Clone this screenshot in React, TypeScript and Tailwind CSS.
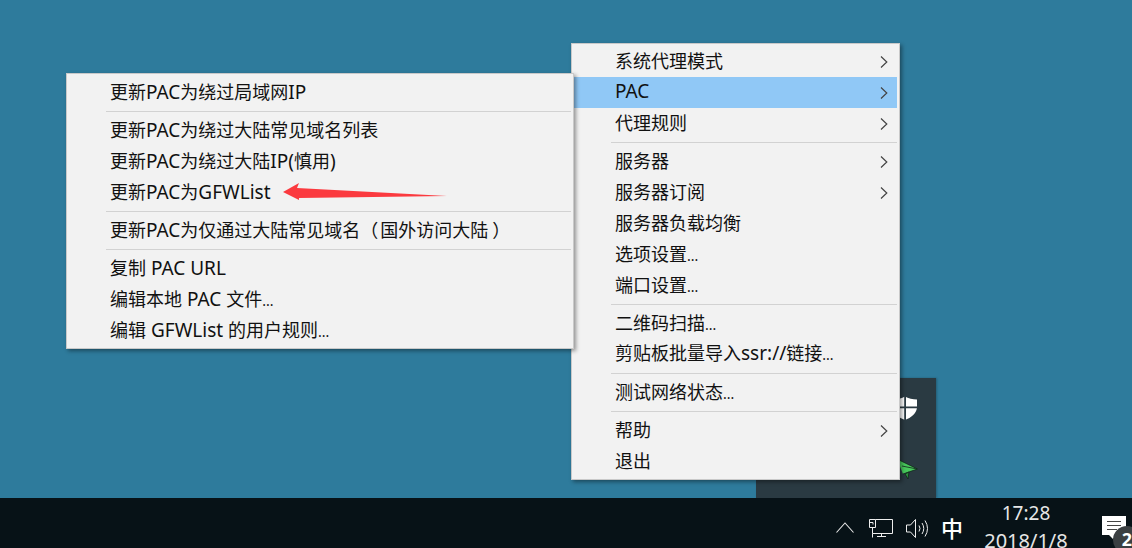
import React from "react";

type Entry = { label?: string; arrow?: boolean; active?: boolean };

const rightMenu: Entry[] = [
  { label: "系统代理模式", arrow: true },
  { label: "PAC", arrow: true, active: true },
  { label: "代理规则", arrow: true },
  {},
  { label: "服务器", arrow: true },
  { label: "服务器订阅", arrow: true },
  { label: "服务器负载均衡" },
  { label: "选项设置..." },
  { label: "端口设置..." },
  {},
  { label: "二维码扫描..." },
  { label: "剪贴板批量导入ssr://链接..." },
  {},
  { label: "测试网络状态..." },
  {},
  { label: "帮助", arrow: true },
  { label: "退出" },
];

const leftMenu: Entry[] = [
  { label: "更新PAC为绕过局域网IP" },
  {},
  { label: "更新PAC为绕过大陆常见域名列表" },
  { label: "更新PAC为绕过大陆IP(慎用)" },
  { label: "更新PAC为GFWList" },
  {},
  { label: "更新PAC为仅通过大陆常见域名（国外访问大陆）" },
  {},
  { label: "复制 PAC URL" },
  { label: "编辑本地 PAC 文件..." },
  { label: "编辑 GFWList 的用户规则..." },
];

// latin runs are a touch larger than the CJK ones in the screenshot, dots narrower
const Label = ({ text }: { text: string }) => (
  <span className="whitespace-pre">
    {text.split(/(\.\.\.|[（）]|[\x20-\x7e]+)/).map((run, i) => {
      if (run === "...") return <span key={i} className="text-[14px]">{run}</span>;
      if (run === "（") return <span key={i} className="mr-[2px]">{run}</span>;
      if (run === "）") return <span key={i} className="ml-[4px]">{run}</span>;
      if (/^[\x20-\x7e]+$/.test(run)) return <span key={i} className="text-[19px]">{run}</span>;
      return run;
    })}
  </span>
);

const Chevron = () => (
  <svg className="mt-[2px]" width="8" height="12" viewBox="0 0 8 12" fill="none" stroke="#444" strokeWidth="1.2">
    <path d="M1 0.5 L6.8 6 L1 11.5" />
  </svg>
);

const MenuRows = ({ items, rowClass }: { items: Entry[]; rowClass: string }) => (
  <>
    {items.map((item, i) =>
      item.label ? (
        <div
          key={i}
          className={`flex h-[31px] items-center justify-between pl-[43px] pr-[9px] text-[18px] leading-none text-[#111] ${rowClass} ${item.active ? "bg-[#90c8f6]" : ""}`}
        >
          <Label text={item.label} />
          {item.arrow && <Chevron />}
        </div>
      ) : (
        <div key={i} className="flex h-[7px] items-center pl-[39px]">
          <div className="h-px w-full bg-[#d2d2d2]" />
        </div>
      ),
    )}
  </>
);

const App = () => {
  return (
    <div className="relative flex h-[548px] w-[1132px] flex-col justify-end overflow-hidden bg-[#2e7b9c] font-['Noto_Sans','Noto_Sans_CJK_SC',sans-serif]">
      {/* tray flyout */}
      <div className="absolute left-[756px] top-[378px] h-[120px] w-[180px] bg-[#2a3a42] shadow-[1px_0_2px_rgba(0,0,0,0.25)]">
        <svg className="absolute left-[136px] top-[18px]" width="26" height="24" viewBox="0 0 26 24">
          <path d="M13 0.5 C10 2.5 5 3.5 1 3.5 V11 C1 17 7 22 13 24 C19 22 25 17 25 11 V3.5 C21 3.5 16 2.5 13 0.5 Z" fill="#fff" />
          <path d="M12.2 0 H14 V24 H12.2 Z M0 10.4 H26 V12.2 H0 Z" fill="#2a3a42" />
        </svg>
        <svg className="absolute left-[139px] top-[77px]" width="26" height="26" viewBox="0 0 26 26">
          <path d="M2 4 L22.5 14 L8 19 Z" fill="#48c95c" />
          <path d="M2 4 L22.5 14 L8 19 M7 11 L22 14" fill="none" stroke="#12261c" strokeWidth="0.8" />
          <path d="M10 19 L13 24 L14 17 Z" fill="#2a8a3c" stroke="#12261c" strokeWidth="0.8" />
        </svg>
      </div>

      {/* main menu */}
      <div className="absolute left-[571px] top-[43px] w-[329px] border border-[#c9c9c9] bg-[#f2f2f2] py-[2px] pr-[2px] shadow-[2px_2px_4px_rgba(0,0,0,0.4)]">
        <MenuRows items={rightMenu} rowClass="pb-[2px]" />
      </div>

      {/* PAC submenu */}
      <div className="absolute left-[66px] top-[73px] w-[508px] border border-[#c9c9c9] bg-[#f2f2f2] pb-[2px] pr-[2px] pt-[3px] shadow-[2px_2px_4px_rgba(0,0,0,0.4)]">
        <MenuRows items={leftMenu} rowClass="pb-0" />
      </div>

      {/* red annotation arrow */}
      <svg className="absolute left-[280px] top-[180px]" width="170" height="24" viewBox="0 0 170 24">
        <path d="M3 12 L19 3 L17 8 L167 16 L19 18 L19 20 Z" fill="#fb3a3f" />
      </svg>

      {/* taskbar */}
      <div className="relative flex h-[50px] items-center justify-end bg-[#071217] text-white">
        <svg className="mr-[15px] mt-[9px]" width="18" height="11" viewBox="0 0 18 11" fill="none" stroke="#e8e8e8" strokeWidth="1.1">
          <path d="M0.5 10.5 L9 1 L17.5 10.5" />
        </svg>
        <svg className="mr-[13px] mt-[10px]" width="24" height="19" viewBox="0 0 24 19" fill="none" stroke="#eee" strokeWidth="1">
          <path d="M0.5 0.5 H6.5 V8.5 H0.5 Z M0.5 3.5 H4 V5.5" />
          <path d="M6.5 0.5 H23.5 V14.5 H3.5 V8.5" />
          <path d="M3.5 14.5 V18.5 M12.5 14.5 V17.5 M8 17.5 H17" />
        </svg>
        <svg className="mr-[12px] mt-[10px]" width="23" height="19" viewBox="0 0 23 19" fill="none" stroke="#eee" strokeWidth="1">
          <path d="M0.5 6 H4.5 L9.5 0.5 V18.5 L4.5 13 H0.5 Z" />
          <path d="M13 6.5 Q15 9.5 13 12.5 M16 4 Q19.5 9.5 16 15 M19 1.5 Q24 9.5 19 17.5" />
        </svg>
        <span className="mr-[21px] mt-[10px] text-[22px] font-medium leading-none text-white">中</span>
        <div className="mr-[64px] flex h-[50px] w-[84px] flex-col items-center pt-[2px] leading-[26px] text-[#e6e6e6]">
          <span className="text-[19px]">17:28</span>
          <span className="mt-[2px] whitespace-pre text-[20px]">2018/1/8</span>
        </div>
        {/* notification bubble and badge */}
        <svg className="absolute left-[1102px] top-[18px]" width="26" height="26" viewBox="0 0 26 26">
          <path d="M0 0 H24 V19 H14 L11 23 L7 19 H0 Z" fill="#fff" />
          <path d="M5 5.5 H19 M5 9.5 H19 M5 13.5 H15" stroke="#444" strokeWidth="1" />
        </svg>
        <div className="absolute left-[1113px] top-[28px] flex h-[28px] w-[28px] items-start justify-center rounded-full bg-[#3a3f42] text-[18px] font-bold leading-[26px] text-white">
          2
        </div>
      </div>
    </div>
  );
};

export default App;
